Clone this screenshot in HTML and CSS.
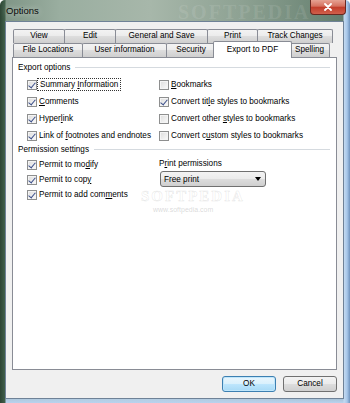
FILE: index.html
```html
<!DOCTYPE html>
<html lang="en">
<head>
    <meta charset="UTF-8">
    <title>Options</title>
    <link rel="stylesheet" href="styles.css">
</head>
<body>
    <div class="window">
        <div class="titlebar">
            <span class="title">Options</span>
            <span class="wm-title">SOFTPEDIA</span>
            <div class="close">
                <svg width="10" height="8" viewBox="0 0 10 8">
                    <path d="M2 1 L8 7 M8 1 L2 7" stroke="#fff" stroke-width="1.8" stroke-linecap="round"/>
                </svg>
            </div>
        </div>

        <div class="client">
            <div class="tabs">
                <div class="tab-row">
                    <div class="tab w-view">View</div>
                    <div class="tab w-edit">Edit</div>
                    <div class="tab w-general">General and Save</div>
                    <div class="tab w-print">Print</div>
                    <div class="tab w-track">Track Changes</div>
                </div>
                <div class="tab-row">
                    <div class="tab w-files">File Locations</div>
                    <div class="tab w-user">User information</div>
                    <div class="tab w-security">Security</div>
                    <div class="tab selected">Export to PDF</div>
                    <div class="tab w-spelling">Spelling</div>
                </div>
            </div>

            <div class="panel">
                <div class="group">
                    <span>Export options</span>
                    <span class="rule"></span>
                </div>
                <div class="columns">
                    <div class="col-left">
                        <div class="row tall"><span class="cb checked"></span><span class="focus">Summary <u>I</u>nformation</span></div>
                        <div class="row tall"><span class="cb checked"></span><span><u>C</u>omments</span></div>
                        <div class="row tall"><span class="cb checked"></span><span>Hyper<u>l</u>ink</span></div>
                        <div class="row tall"><span class="cb checked"></span><span>Link of <u>f</u>ootnotes and endnotes</span></div>
                    </div>
                    <div class="col-right">
                        <div class="row tall"><span class="cb"></span><span><u>B</u>ookmarks</span></div>
                        <div class="row tall"><span class="cb checked"></span><span>Convert tit<u>l</u>e styles to bookmarks</span></div>
                        <div class="row tall"><span class="cb"></span><span>Convert other <u>s</u>tyles to bookmarks</span></div>
                        <div class="row tall"><span class="cb"></span><span>Convert c<u>u</u>stom styles to bookmarks</span></div>
                    </div>
                </div>

                <div class="group">
                    <span>Permission settings</span>
                    <span class="rule"></span>
                </div>
                <div class="columns perms">
                    <div class="col-left">
                        <div class="row"><span class="cb checked"></span><span>Permit to mo<u>d</u>ify</span></div>
                        <div class="row"><span class="cb checked"></span><span>Permit to cop<u>y</u></span></div>
                        <div class="row"><span class="cb checked"></span><span>Permit to add com<u>m</u>ents</span></div>
                    </div>
                    <div class="col-right">
                        <div class="field-label">P<u>r</u>int permissions</div>
                        <div class="select">
                            <span>Free print</span>
                            <span class="arrow"></span>
                        </div>
                    </div>
                </div>

                <span class="wm-big">SOFTPEDIA</span>
                <span class="wm-url">www.softpedia.com</span>
            </div>

            <div class="buttons">
                <div class="btn default">OK</div>
                <div class="btn">Cancel</div>
            </div>
        </div>
    </div>
</body>
</html>
```

FILE: styles.css
```css
* {
    box-sizing: border-box;
}
body {
    margin: 0;
    font-family: "Liberation Sans", Arial, sans-serif;
    font-size: 8.2px;
    color: #000;
    background: #fff;
}
u {
    text-decoration: underline;
    text-underline-offset: 1px;
}
.window {
    width: 350px;
    height: 403px;
    display: flex;
    flex-direction: column;
    overflow: hidden;
    border-radius: 5px 5px 0 0;
    background:
        linear-gradient(90deg, #2d4534 0, #41604b 5px, transparent 6px),
        linear-gradient(270deg, #6f93bd 0, #a9c8ea 3px, #c4daf0 6px, transparent 7px),
        linear-gradient(180deg, transparent 380px, #b8d2ee 100%),
        linear-gradient(90deg, #7d9384 0, #9aaea0 60px, #a7b7aa 150px, #8ea293 240px, #6d8676 320px, #5f7a6d 350px);
}
.titlebar {
    height: 21px;
    display: flex;
    align-items: flex-start;
    position: relative;
}
.title {
    padding: 5px 0 0 6px;
    font-size: 9.5px;
    color: #0a0a0a;
    text-shadow: 0 0 6px rgba(255, 255, 255, 0.7);
}
.wm-title {
    position: absolute;
    left: 178px;
    top: 1px;
    font-family: "Liberation Serif", serif;
    font-size: 20px;
    font-weight: bold;
    letter-spacing: 2px;
    color: rgba(255, 255, 255, 0.1);
}
.close {
    margin-left: auto;
    margin-right: 4px;
    width: 36px;
    height: 15px;
    display: flex;
    align-items: center;
    justify-content: center;
    border: 1px solid #6a2820;
    border-top: none;
    border-radius: 0 0 4px 4px;
    background: linear-gradient(#e6a293 0, #d5705e 45%, #c23c29 50%, #d0604c 100%);
}
.client {
    flex: 1;
    margin: 0 6px 4px 5px;
    border: 1px solid #6f8297;
    background: #f0f0f0;
    padding-top: 7px;
    display: flex;
    flex-direction: column;
}
.tabs {
    padding-left: 7px;
}
.tab-row {
    display: flex;
    height: 14px;
}
.tab {
    height: 14px;
    margin-right: -1px;
    border: 1px solid #898c95;
    border-bottom: none;
    border-radius: 2px 2px 0 0;
    background: linear-gradient(#f3f3f3 0, #ebebeb 50%, #dddddd 50%, #cfcfcf 100%);
    text-align: center;
    line-height: 12px;
    white-space: nowrap;
}
.w-view { width: 52px; }
.w-edit { width: 52px; }
.w-general { width: 93px; }
.w-print { width: 51px; }
.w-track { width: 76px; }
.w-files { width: 70px; }
.w-user { width: 85px; }
.w-security { width: 50px; }
.w-spelling { width: 41px; }
.tab.selected {
    width: 79px;
    height: 17px;
    margin: -2px -3px -1px -2px;
    background: #fff;
    position: relative;
    z-index: 1;
    line-height: 15px;
}
.panel {
    position: relative;
    height: 313px;
    margin: 0 6px;
    border: 1px solid #898c95;
    background: #fff;
    padding: 4px 0 0 5px;
}
.group {
    display: flex;
    align-items: center;
    gap: 5px;
    height: 11px;
    padding-right: 6px;
}
.rule {
    flex: 1;
    height: 1px;
    background: #d5dadf;
}
.columns {
    display: flex;
    margin-top: 3px;
}
.columns.perms {
    margin-top: 2px;
}
.col-left {
    width: 141px;
    padding-left: 9px;
}
.row {
    display: flex;
    align-items: center;
    height: 15px;
    white-space: nowrap;
}
.row.tall {
    height: 17px;
}
.cb {
    flex: none;
    width: 10px;
    height: 10px;
    margin-right: 2px;
    border: 1px solid #8e8f8f;
    background: linear-gradient(135deg, #dcdcdc, #fbfbfb);
    box-shadow: inset 0 0 0 1px #f4f4f4;
    position: relative;
}
.cb.checked::after {
    content: "";
    position: absolute;
    left: 2px;
    top: 0px;
    width: 3px;
    height: 6px;
    border: solid #3b4f8a;
    border-width: 0 1.5px 1.5px 0;
    transform: rotate(40deg);
}
.focus {
    outline: 1px dotted #333;
    outline-offset: 1px;
    padding: 0 1px;
}
.field-label {
    height: 14px;
    line-height: 14px;
}
.select {
    width: 106px;
    height: 16px;
    margin-left: 1px;
    display: flex;
    align-items: center;
    justify-content: space-between;
    padding: 0 4px 0 3px;
    border: 1px solid #707070;
    border-radius: 3px;
    background: linear-gradient(#f3f3f3 0, #ebebeb 50%, #dddddd 50%, #cfcfcf 100%);
}
.arrow {
    width: 0;
    height: 0;
    border-left: 3.5px solid transparent;
    border-right: 3.5px solid transparent;
    border-top: 4px solid #000;
}
.wm-big {
    position: absolute;
    left: 128px;
    top: 130px;
    font-family: "Liberation Serif", serif;
    font-size: 15px;
    font-weight: bold;
    letter-spacing: 2px;
    color: transparent;
    -webkit-text-stroke: 0.5px rgba(150, 150, 150, 0.25);
}
.wm-url {
    position: absolute;
    left: 140px;
    top: 148px;
    font-size: 7px;
    color: rgba(160, 160, 160, 0.4);
}
.buttons {
    display: flex;
    justify-content: flex-end;
    gap: 7px;
    margin-top: 6px;
    padding-right: 6px;
}
.btn {
    width: 54px;
    height: 16px;
    border: 1px solid #707070;
    border-radius: 3px;
    background: linear-gradient(#f3f3f3 0, #ebebeb 50%, #dddddd 50%, #cfcfcf 100%);
    text-align: center;
    line-height: 14px;
}
.btn.default {
    border-color: #3c7fb1;
    background: linear-gradient(#eaf6fd 0, #d9f0fc 50%, #bee6fd 50%, #a7d9f5 100%);
    box-shadow: inset 0 0 0 1px #bfe6fb;
}
```
